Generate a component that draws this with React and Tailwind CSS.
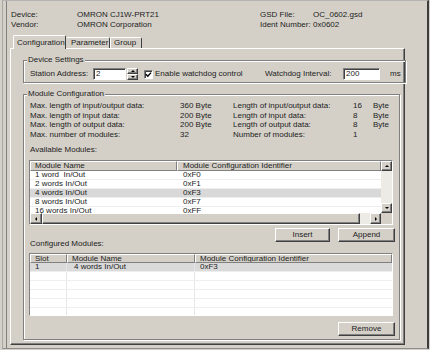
import React from "react";

const raised =
  "bg-[#d4d0c8] border border-t-white border-l-white border-r-[#404040] border-b-[#404040] shadow-[inset_-1px_-1px_0_#808080]";
const sunken =
  "border border-t-[#808080] border-l-[#808080] border-r-white border-b-white shadow-[inset_1px_1px_0_#404040]";
const headCell =
  "bg-[#d4d0c8] border border-t-white border-l-white border-r-[#808080] border-b-[#808080] h-full flex items-center overflow-hidden whitespace-nowrap";
const etched =
  "border border-[#808080] shadow-[inset_1px_1px_0_#ffffff,1px_1px_0_#ffffff]";

function Tri({ dir, size = 3 }) {
  const s = size;
  let pts;
  if (dir === "up") pts = `0,${s} ${s},0 ${2 * s},${s}`;
  else if (dir === "down") pts = `0,0 ${2 * s},0 ${s},${s}`;
  else if (dir === "left") pts = `${s},0 ${s},${2 * s} 0,${s}`;
  else pts = `0,0 0,${2 * s} ${s},${s}`;
  const w = dir === "up" || dir === "down" ? 2 * s : s;
  const h = dir === "up" || dir === "down" ? s : 2 * s;
  return (
    <svg width={w} height={h} viewBox={`0 0 ${w} ${h}`} className="block">
      <polygon points={pts} fill="#000" />
    </svg>
  );
}

export default function App() {
  const avail = [
    ["1 word  In/Out", "0xF0", false],
    ["2 words In/Out", "0xF1", false],
    ["4 words In/Out", "0xF3", true],
    ["8 words In/Out", "0xF7", false],
    ["16 words In/Out", "0xFF", false],
  ];
  const info = [
    ["Max. length of input/output data:", "360 Byte", "Length of input/output data:", "16", "Byte"],
    ["Max. length of input data:", "200 Byte", "Length of input data:", "8", "Byte"],
    ["Max. length of output data:", "200 Byte", "Length of output data:", "8", "Byte"],
    ["Max. number of modules:", "32", "Number of modules:", "1", ""],
  ];
  return (
    <div className="w-[430px] h-[350px] overflow-hidden bg-[#d4d0c8] font-['Liberation_Sans',Arial,sans-serif] text-[8px] leading-[10px] text-[#1c1c1c] flex">
      <div className="ml-[2px] w-[427px] h-[349px] border-t border-l border-r-2 border-b border-t-[#b4b4b4] border-l-[#a8a8a8] border-r-[#3c3c3c] border-b-[#8c8c8c] pl-[3px]">
        <div className="h-full border-l border-l-[#808080] pt-[9px]">
          {/* header info */}
          <div className="grid grid-cols-[66px_183px_53px_auto] auto-rows-[10px] pl-[4px] whitespace-nowrap">
            <span>Device:</span>
            <span>OMRON CJ1W-PRT21</span>
            <span>GSD File:</span>
            <span>OC_0602.gsd</span>
            <span>Vendor:</span>
            <span>OMRON Corporation</span>
            <span>Ident Number:</span>
            <span>0x0602</span>
          </div>

          {/* tabs */}
          <div className="mt-[5px] ml-[3px]">
            <div className="flex items-end h-[13px] pl-[3px]">
              <div className="relative z-10 -mb-px h-[14px] w-[53px] bg-[#d4d0c8] border-t border-l border-r border-t-white border-l-white border-r-[#404040] rounded-t-[2px] pl-[3px] flex items-center whitespace-nowrap">
                Configuration
              </div>
              <div className="h-[11px] w-[44px] border-t border-r border-t-white border-r-[#404040] rounded-t-[2px] pl-[5px] flex items-center whitespace-nowrap">
                Parameter
              </div>
              <div className="h-[11px] w-[32px] border-t border-l border-r border-t-white border-l-white border-r-[#404040] rounded-t-[2px] pl-[3px] flex items-center whitespace-nowrap">
                Group
              </div>
            </div>

            {/* panel */}
            <div className="w-[395px] h-[297px] border border-t-white border-l-white border-r-[#404040] border-b-[#404040] shadow-[inset_-1px_-1px_0_#808080] pt-[6px] pl-[12px]">
              {/* Device Settings */}
              <fieldset className={`${etched} w-[377px] pl-[5px] pr-[4px] pt-[3px] pb-[2px]`}>
                <legend className="bg-[#d4d0c8] px-[1px] -ml-[2px] leading-[10px]">Device Settings</legend>
                <div className="flex items-center h-[12px] whitespace-nowrap">
                  <span className="w-[64px] pl-[1px]">Station Address:</span>
                  <div className={`${sunken} bg-white w-[33px] h-[12px] pl-[2px] flex items-center`}>2</div>
                  <div className="ml-[1px] w-[11px] h-[12px] flex flex-col">
                    <div className={`${raised} h-[6px] flex items-center justify-center`}>
                      <Tri dir="up" size={2} />
                    </div>
                    <div className={`${raised} h-[6px] flex items-center justify-center`}>
                      <Tri dir="down" size={2} />
                    </div>
                  </div>
                  <div className={`${sunken} bg-white ml-[6px] w-[9px] h-[9px] flex items-center justify-center`}>
                    <svg width="7" height="7" viewBox="0 0 7 7" className="block">
                      <path d="M1 3.3 L2.8 5.2 L6 1.6" stroke="#000" strokeWidth="1.4" fill="none" />
                    </svg>
                  </div>
                  <span className="ml-[2px] w-[110px]">Enable watchdog control</span>
                  <span className="w-[78px]">Watchdog Interval:</span>
                  <div className={`${sunken} bg-white w-[37px] h-[12px] pl-[2px] flex items-center`}>200</div>
                  <span className="ml-[10px]">ms</span>
                </div>
              </fieldset>

              {/* Module Configuration */}
              <fieldset className={`${etched} mt-[6px] w-[377px] pl-[5px] pr-[4px] pt-[2px] pb-[3px]`}>
                <legend className="bg-[#d4d0c8] px-[1px] -ml-[2px] leading-[10px]">Module Configuration</legend>
                <div className="grid grid-cols-[150px_53px_120px_20px_auto] auto-rows-[9.5px] pl-[1px] whitespace-nowrap">
                  {info.map((r, i) => (
                    <React.Fragment key={i}>
                      <span>{r[0]}</span>
                      <span>{r[1]}</span>
                      <span>{r[2]}</span>
                      <span>{r[3]}</span>
                      <span>{r[4]}</span>
                    </React.Fragment>
                  ))}
                </div>
                <div className="mt-[6px] h-[10px] pl-[1px]">Available Modules:</div>

                {/* Available modules table */}
                <div className={`${sunken} mt-[5px] w-[364px] h-[65px] flex flex-col`}>
                  <div className="flex h-[52px]">
                    <div className="w-[351px] h-full overflow-hidden bg-white">
                      <div className="flex h-[10px]">
                        <div className={`${headCell} w-[147px] pl-[4px]`}>Module Name</div>
                        <div className={`${headCell} flex-1 pl-[5px]`}>Module Configuration Identifier</div>
                      </div>
                      {avail.map(([n, id, sel], i) => (
                        <div
                          key={i}
                          className={`flex h-[9px] items-center whitespace-pre border-b border-b-[#eeeeee] ${sel ? "bg-[#d8d8d8]" : "bg-white"}`}
                        >
                          <span className="w-[147px] pl-[5px]">{n}</span>
                          <span className="pl-[6px]">{id}</span>
                        </div>
                      ))}
                    </div>
                    <div className="w-[11px] h-full flex flex-col bg-[#ecebe6]">
                      <div className={`${raised} h-[10px] flex items-center justify-center`}>
                        <Tri dir="up" size={2} />
                      </div>
                      <div className="flex-1" />
                      <div className={`${raised} h-[10px] flex items-center justify-center`}>
                        <Tri dir="down" size={2} />
                      </div>
                    </div>
                  </div>
                  <div className="flex h-[11px]">
                    <div className={`${raised} w-[12px] h-full flex items-center justify-center`}>
                      <Tri dir="left" size={2} />
                    </div>
                    <div className={`${raised} w-[318px] h-full`} />
                    <div className="w-[10px] h-full bg-[#ecebe6]" />
                    <div className={`${raised} w-[11px] h-full flex items-center justify-center`}>
                      <Tri dir="right" size={2} />
                    </div>
                    <div className="w-[11px] h-full bg-[#d4d0c8]" />
                  </div>
                </div>

                {/* buttons + label */}
                <div className="mt-[3px] flex items-start h-[21px]">
                  <span className="mt-[11px] pl-[1px] whitespace-nowrap">Configured Modules:</span>
                  <div className={`${raised} ml-auto w-[55px] h-[14px] flex items-center justify-center`}>Insert</div>
                  <div className={`${raised} ml-[8px] w-[57px] h-[14px] flex items-center justify-center`}>Append</div>
                </div>

                {/* Configured modules table */}
                <div className={`${sunken} mt-[4px] w-[364px] h-[63px] bg-white overflow-hidden`}>
                  <div className="flex h-[9px]">
                    <div className={`${headCell} w-[37px] pl-[4px]`}>Slot</div>
                    <div className={`${headCell} w-[128px] pl-[4px]`}>Module Name</div>
                    <div className={`${headCell} flex-1 pl-[4px]`}>Module Configuration Identifier</div>
                  </div>
                  {[0, 1, 2, 3, 4, 5].map((i) => (
                    <div
                      key={i}
                      className={`flex h-[9px] items-center whitespace-pre border-b border-b-[#eeeeee] ${i === 0 ? "bg-[#dadada]" : "bg-white"}`}
                    >
                      <span className="w-[37px] h-full pl-[5px] border-r border-r-[#e6e6e6] flex items-center">{i === 0 ? "1" : ""}</span>
                      <span className="w-[128px] h-full pl-[7px] border-r border-r-[#e6e6e6] flex items-center">{i === 0 ? "4 words In/Out" : ""}</span>
                      <span className="pl-[5px]">{i === 0 ? "0xF3" : ""}</span>
                    </div>
                  ))}
                </div>

                <div className="mt-[6px] flex justify-end">
                  <div className={`${raised} w-[57px] h-[14px] flex items-center justify-center`}>Remove</div>
                </div>
              </fieldset>
            </div>
          </div>
        </div>
      </div>
    </div>
  );
}
